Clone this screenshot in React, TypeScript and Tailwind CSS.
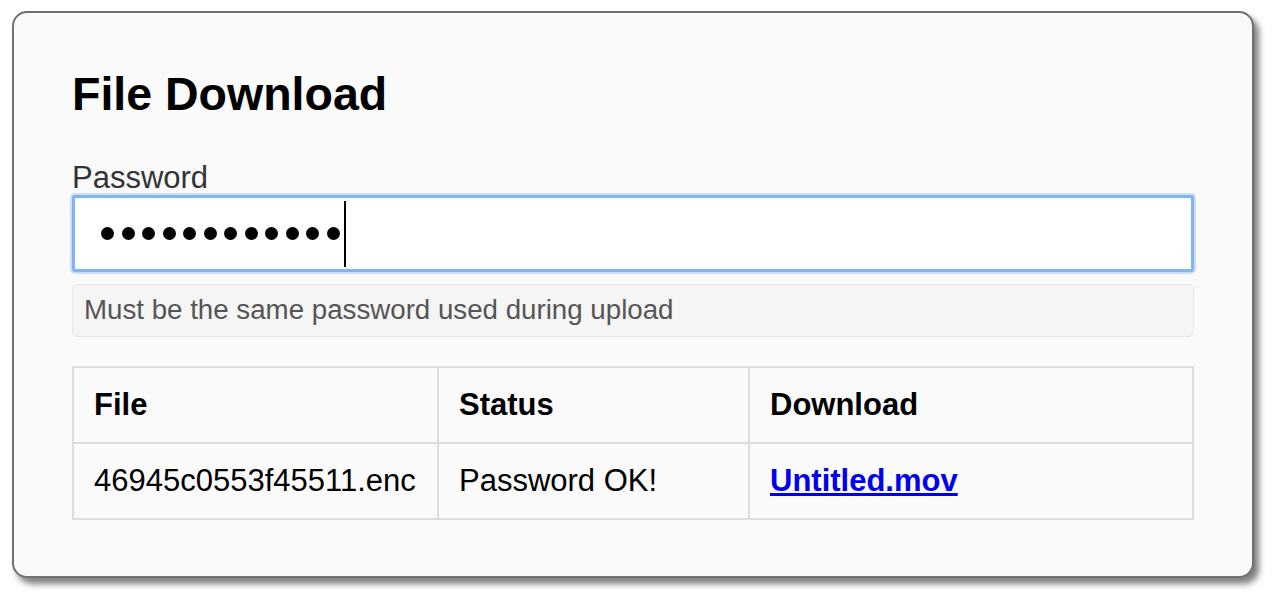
import React from 'react';

export default function App() {
  const dots = Array.from({ length: 12 });

  return (
    <div className="min-h-screen bg-white pl-[12px] pt-[11px] font-['Liberation_Sans',Arial,sans-serif]">
      {/* Card */}
      <div className="w-[1242px] h-[567px] rounded-[15px] border-2 border-[#717171] bg-[#fafafa] shadow-[5px_6px_6px_rgba(0,0,0,0.5)] px-[58px] pt-[58px]">
        <h1 className="text-[46.5px] leading-none font-bold text-black">File Download</h1>

        {/* Password field */}
        <label className="block mt-[44px] text-[31px] leading-none text-[#333]">Password</label>
        <div className="mt-[2px] h-[77px] border-[3px] border-[#82b3f4] bg-white rounded-[3px] shadow-[0_0_0_2px_rgba(150,190,245,0.45)] flex items-center pl-[26px]">
          <div className="flex items-center gap-[7.5px]">
            {dots.map((_, i) => (
              <span key={i} className="block w-[13px] h-[13px] rounded-full bg-black" />
            ))}
          </div>
          <span className="block w-[2px] h-[66px] bg-black ml-[4px] mt-[2px]" />
        </div>

        {/* Help text */}
        <div className="mt-[12px] h-[53px] rounded-[6px] border border-[#e6e6e6] bg-[#f5f5f5] pl-[11px] pt-[11px] text-[27.7px] leading-none text-[#555]">
          Must be the same password used during upload
        </div>

        {/* Files table */}
        <div className="mt-[29px] grid grid-cols-[365px_311px_1fr] border-l-2 border-t-2 border-[#dddddd] text-[31px] leading-none text-black">
          <div className="h-[76px] border-r-2 border-b-2 border-[#dddddd] pl-[20px] flex items-center font-bold">File</div>
          <div className="h-[76px] border-r-2 border-b-2 border-[#dddddd] pl-[20px] flex items-center font-bold">Status</div>
          <div className="h-[76px] border-r-2 border-b-2 border-[#dddddd] pl-[20px] flex items-center font-bold">Download</div>
          <div className="h-[76px] border-r-2 border-b-2 border-[#dddddd] pl-[20px] flex items-center">46945c0553f45511.enc</div>
          <div className="h-[76px] border-r-2 border-b-2 border-[#dddddd] pl-[20px] flex items-center">Password OK!</div>
          <div className="h-[76px] border-r-2 border-b-2 border-[#dddddd] pl-[20px] flex items-center">
            <a href="#" className="font-bold text-[#0000ee] underline">Untitled.mov</a>
          </div>
        </div>
      </div>
    </div>
  );
}
